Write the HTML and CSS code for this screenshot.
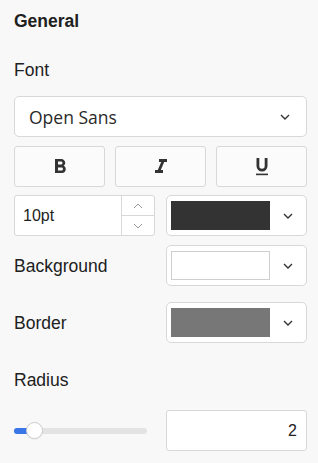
FILE: index.html
```html
<!DOCTYPE html>
<html>
<head>
<meta charset="utf-8">
<link rel="stylesheet" href="styles.css">
</head>
<body>
<div class="panel">
  <div class="heading">General</div>
  <div class="label label-font">Font</div>
  <div class="select">
    <span class="select-text">Open Sans</span>
    <svg class="chev" width="10" height="6" viewBox="0 0 10 6"><path d="M1 1l4 4 4-4" fill="none" stroke="#333" stroke-width="1.4"/></svg>
  </div>
  <div class="buttons">
    <div class="btn">
      <svg width="24" height="24" viewBox="0 0 24 24"><path fill="#333" d="M15.6 10.79c.97-.67 1.65-1.770 1.65-2.79 0-2.26-1.75-4-4-4H7v14h7.04c2.09 0 3.71-1.7 3.71-3.79 0-1.52-.86-2.82-2.15-3.42zM10 6.5h3c.83 0 1.5.67 1.5 1.5s-.67 1.5-1.5 1.5h-3v-3zm3.5 9H10v-3h3.5c.83 0 1.5.67 1.5 1.5s-.67 1.5-1.5 1.5z"/></svg>
    </div>
    <div class="btn">
      <svg width="24" height="24" viewBox="0 0 24 24"><path fill="#333" d="M10 4v3h2.21l-3.42 8H6v3h8v-3h-2.21l3.42-8H18V4z"/></svg>
    </div>
    <div class="btn">
      <svg width="12" height="18" viewBox="0 0 12 18"><path fill="#333" d="M0.5 0h2.8v8a2.7 2.7 0 0 0 5.4 0V0h2.8v8a5.5 5.5 0 0 1-11 0z"/><rect x="0" y="15.6" width="12" height="1.6" fill="#333"/></svg>
    </div>
  </div>
  <div class="row">
    <div class="spinner">
      <span class="spin-text">10pt</span>
      <div class="steps">
        <div class="step"><svg width="10" height="6" viewBox="0 0 10 6"><path d="M1 5l4-4 4 4" fill="none" stroke="#9a9a9a" stroke-width="1"/></svg></div>
        <div class="step"><svg width="10" height="6" viewBox="0 0 10 6"><path d="M1 1l4 4 4-4" fill="none" stroke="#9a9a9a" stroke-width="1"/></svg></div>
      </div>
    </div>
    <div class="color-select">
      <span class="swatch swatch-dark"></span>
      <svg class="chev" width="10" height="6" viewBox="0 0 10 6"><path d="M1 1l4 4 4-4" fill="none" stroke="#333" stroke-width="1.4"/></svg>
    </div>
  </div>
  <div class="row row-bg">
    <div class="label">Background</div>
    <div class="color-select">
      <span class="swatch swatch-white"></span>
      <svg class="chev" width="10" height="6" viewBox="0 0 10 6"><path d="M1 1l4 4 4-4" fill="none" stroke="#333" stroke-width="1.4"/></svg>
    </div>
  </div>
  <div class="row row-border">
    <div class="label">Border</div>
    <div class="color-select">
      <span class="swatch swatch-gray"></span>
      <svg class="chev" width="10" height="6" viewBox="0 0 10 6"><path d="M1 1l4 4 4-4" fill="none" stroke="#333" stroke-width="1.4"/></svg>
    </div>
  </div>
  <div class="label label-radius">Radius</div>
  <div class="row row-radius">
    <div class="slider">
      <div class="track"><div class="fill"></div></div>
      <div class="thumb"></div>
    </div>
    <div class="number">2</div>
  </div>
</div>
</body>
</html>
```
FILE: styles.css
```css
html, body {
  margin: 0;
  padding: 0;
  background: #f8f8f8;
}
.panel {
  padding: 11px 11px 0 14px;
  font-family: "Liberation Sans", Arial, sans-serif;
  color: #202020;
  display: flex;
  flex-direction: column;
}
.heading {
  font-weight: bold;
  font-size: 17.5px;
  line-height: 20px;
}
.label {
  font-size: 17.5px;
  line-height: 20px;
}
.label-font {
  margin-top: 29px;
}
.select {
  margin-top: 16px;
  height: 41px;
  box-sizing: border-box;
  border: 1px solid #d8d8d8;
  border-radius: 5px;
  background: #fff;
  display: flex;
  align-items: center;
  justify-content: space-between;
  padding: 0 16px 0 14px;
}
.select-text {
  font-family: "Open Sans", sans-serif;
  font-size: 17.5px;
  color: #2a2a2a;
}
.buttons {
  margin-top: 9px;
  display: grid;
  grid-template-columns: 1fr 1fr 1fr;
  gap: 10px;
}
.btn {
  height: 41px;
  box-sizing: border-box;
  border: 1px solid #d8d8d8;
  border-radius: 3px;
  background: #fbfbfb;
  display: flex;
  align-items: center;
  justify-content: center;
}
.row {
  display: grid;
  grid-template-columns: 1fr 1fr;
  column-gap: 11px;
  align-items: center;
  margin-top: 8px;
}
.row-bg {
  margin-top: 9px;
}
.row-border {
  margin-top: 16px;
}
.spinner {
  height: 41px;
  box-sizing: border-box;
  border: 1px solid #d8d8d8;
  border-radius: 3px;
  background: #fff;
  display: flex;
}
.spin-text {
  flex: 1;
  display: flex;
  align-items: center;
  padding-left: 8px;
  font-size: 16px;
  color: #222;
}
.steps {
  width: 32px;
  border-left: 1px solid #d8d8d8;
  display: flex;
  flex-direction: column;
}
.step {
  flex: 1;
  display: flex;
  align-items: center;
  justify-content: center;
}
.step + .step {
  border-top: 1px solid #d8d8d8;
}
.color-select {
  height: 41px;
  box-sizing: border-box;
  border: 1px solid #d8d8d8;
  border-radius: 5px;
  background: #fff;
  display: flex;
  align-items: center;
  justify-content: space-between;
  padding: 0 13px 0 4px;
}
.swatch {
  width: 99px;
  height: 29px;
  box-sizing: border-box;
}
.swatch-dark {
  background: #333333;
}
.swatch-white {
  background: #fff;
  border: 1px solid #cfcfcf;
}
.swatch-gray {
  background: #777777;
}
.label-radius {
  margin-top: 27px;
}
.row-radius {
  margin-top: 20px;
}
.slider {
  position: relative;
  height: 41px;
  display: flex;
  align-items: center;
  margin-right: 8px;
}
.track {
  flex: 1;
  height: 6px;
  border-radius: 3px;
  background: #e3e3e3;
  overflow: hidden;
}
.fill {
  width: 22px;
  height: 100%;
  background: #3b76e8;
}
.thumb {
  position: absolute;
  left: 12px;
  top: 12px;
  width: 17px;
  height: 17px;
  box-sizing: border-box;
  border-radius: 50%;
  background: #fff;
  border: 1px solid #cccccc;
  box-shadow: 0 1px 1px rgba(0,0,0,0.05);
}
.number {
  height: 41px;
  box-sizing: border-box;
  border: 1px solid #d8d8d8;
  border-radius: 3px;
  background: #fff;
  display: flex;
  align-items: center;
  justify-content: flex-end;
  padding-right: 9px;
  font-size: 16px;
  color: #222;
}
```
